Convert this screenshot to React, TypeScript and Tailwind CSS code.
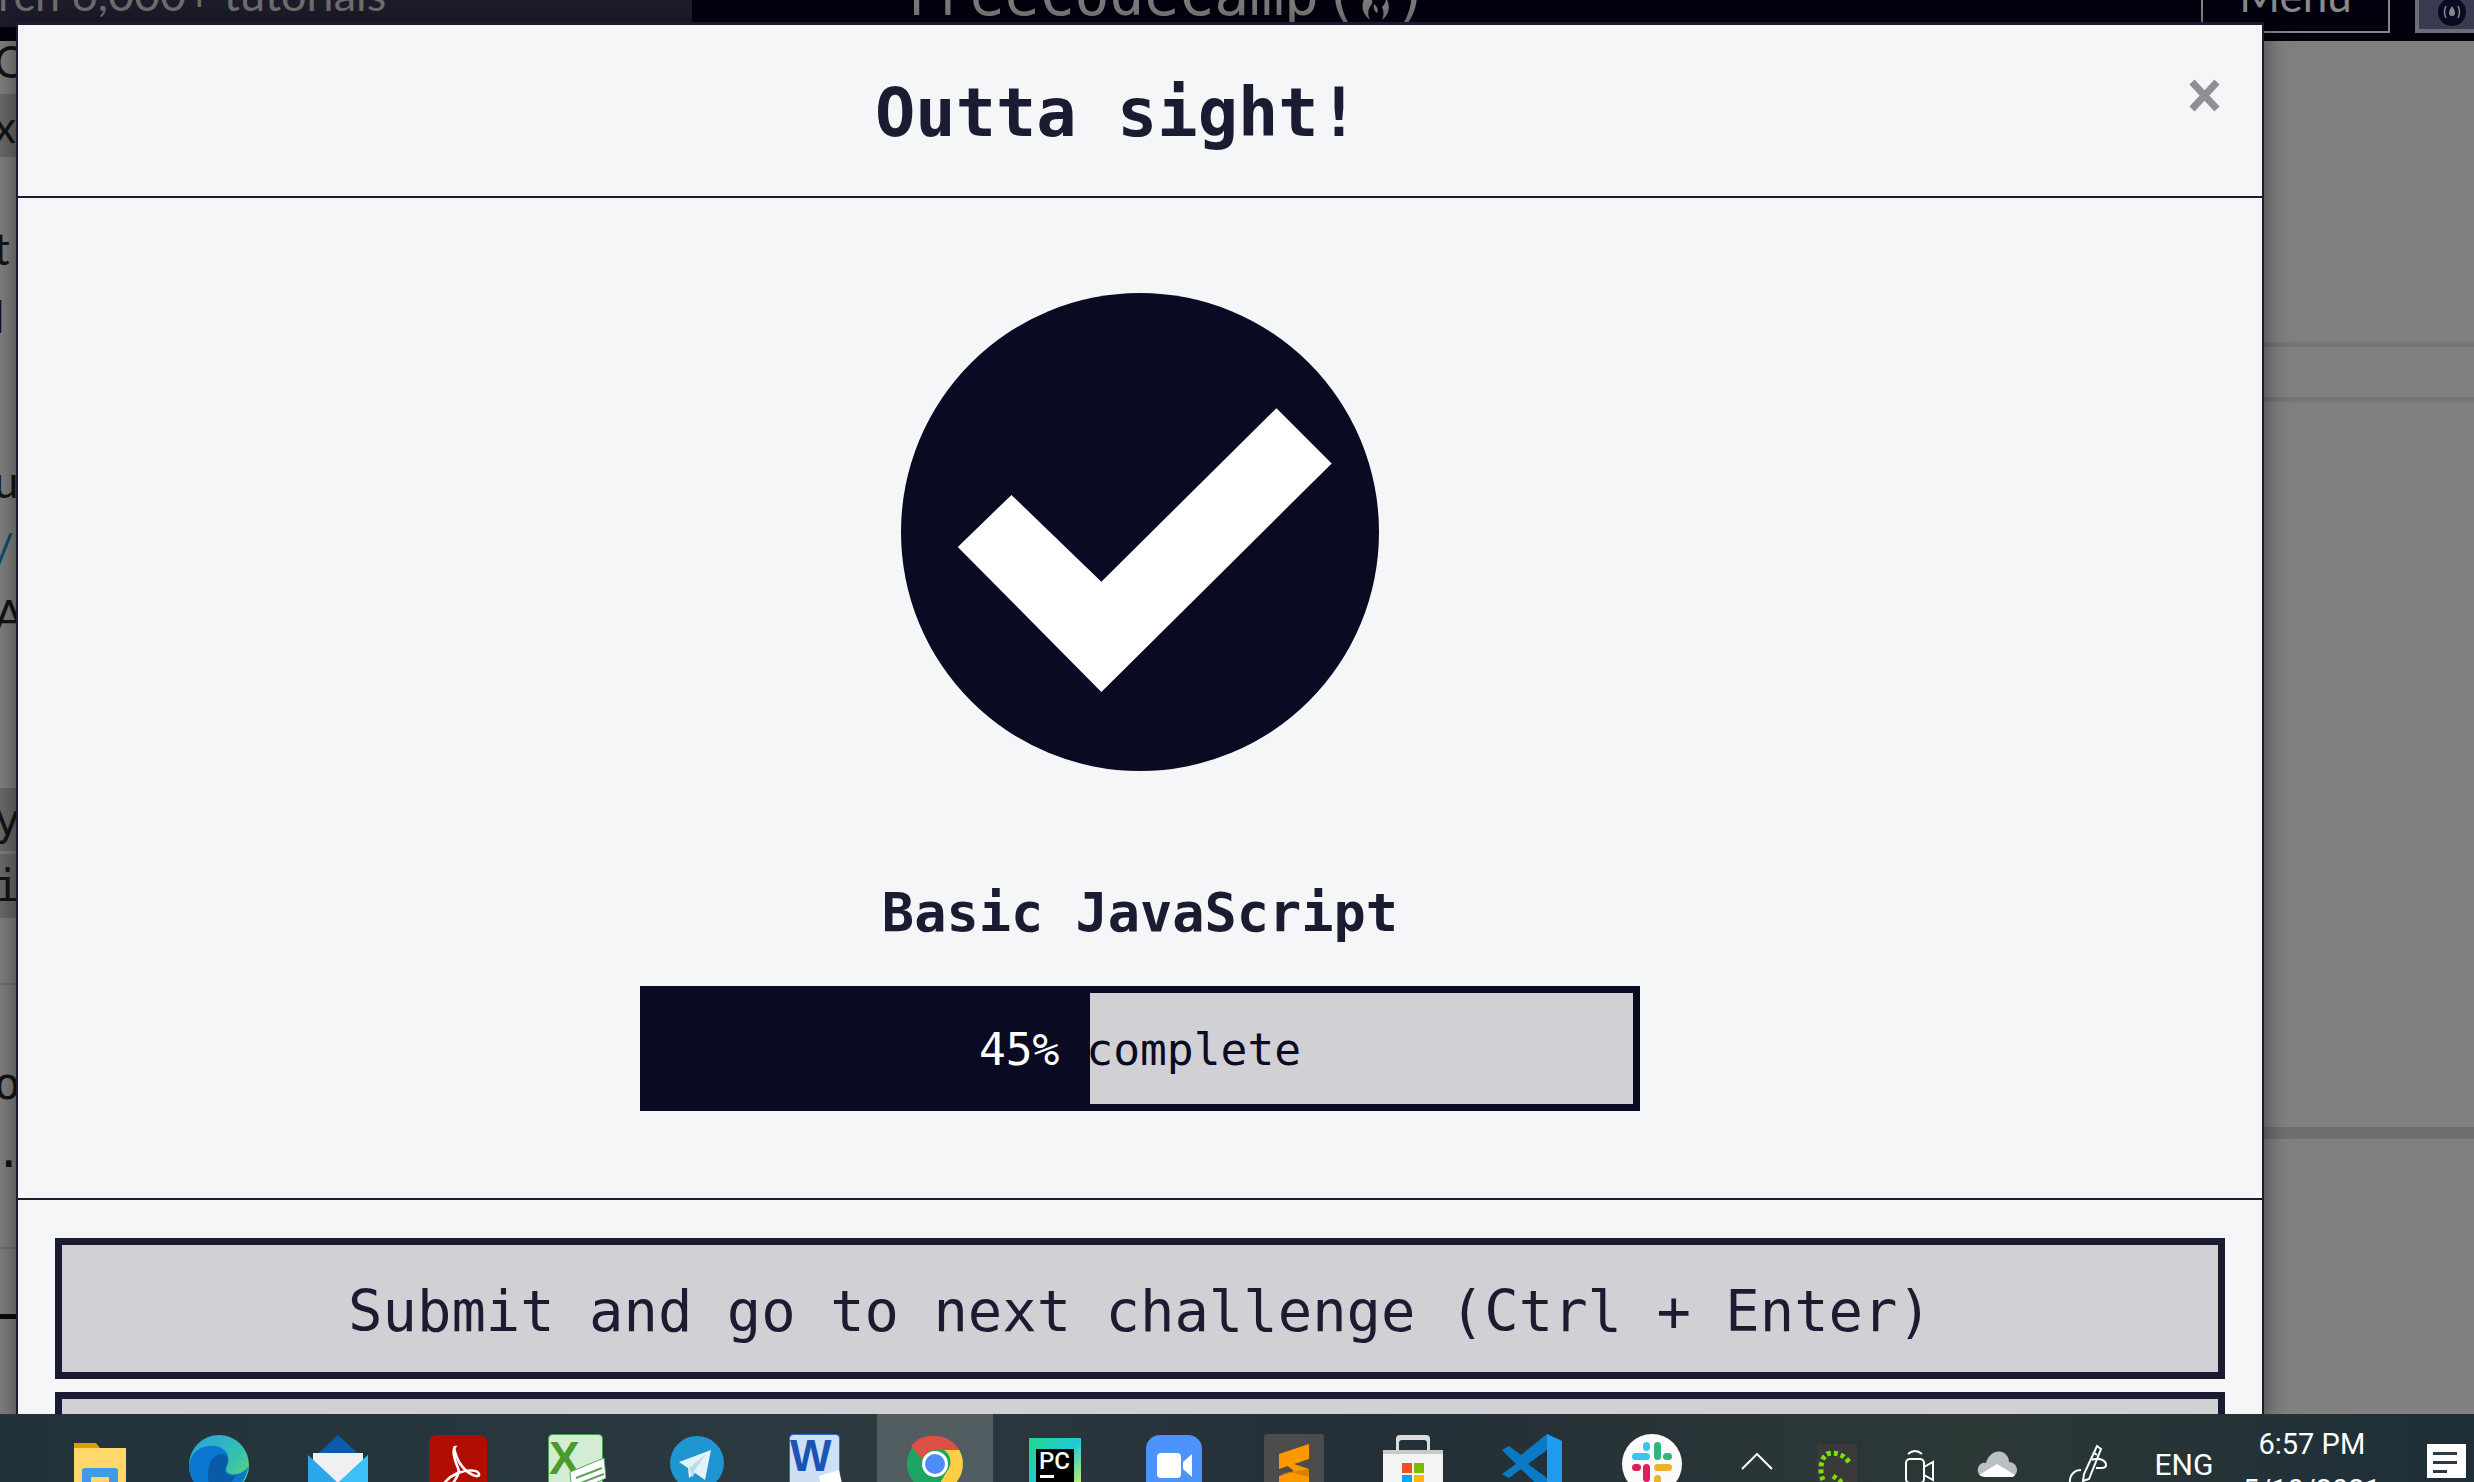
import React from "react";

const mono = "font-['DejaVu_Sans_Mono','Liberation_Mono',monospace]";

const Folder = () => (
  <svg width="60" height="60" viewBox="0 0 60 60" className="mt-[28px]">
    <path d="M4 1h22l4 5v6H4z" fill="#dd9f00" />
    <path d="M4 6h52v54H4z" fill="#ffd76b" />
    <rect x="12" y="26" width="36" height="34" rx="3" fill="#3f9be8" />
    <rect x="21" y="35" width="18" height="25" fill="#ffd76b" />
  </svg>
);
const Edge = () => (
  <svg width="62" height="62" viewBox="0 0 62 62" className="mt-[20px]">
    <defs>
      <linearGradient id="eg" x1="0.2" y1="0" x2="1" y2="0.8">
        <stop offset="0" stopColor="#2aa6d8" />
        <stop offset="0.6" stopColor="#35c2b0" />
        <stop offset="1" stopColor="#6ad85c" />
      </linearGradient>
    </defs>
    <circle cx="31" cy="31" r="30" fill="url(#eg)" />
    <path d="M1 31C3 16 16 10 28 12c10 2 14 10 12 17-1 4-3 6-1 9 2 2 6 3 10 2 5-1 9-4 11-7-2 16-15 28-30 28C13 61 1 48 1 31z" fill="#0a78d0" />
    <path d="M20 40c0-12 6-20 14-20 5 0 7 5 5 10-1 4-3 6-1 9 2 3 6 3 10 2-6 12-18 20-22 18-4-3-6-10-6-19z" fill="#0b5aa8" />
  </svg>
);
const Mail = () => (
  <svg width="60" height="60" viewBox="0 0 60 60" className="mt-[21px]">
    <path d="M30 0L60 28V60H0V28z" fill="#0b5bab" />
    <path d="M5 18h50v10L30 50 5 28z" fill="#f0f0f2" />
    <path d="M0 20l30 28 30-28v40H0z" fill="#29a6ec" />
    <path d="M60 20v40H32L30 48z" fill="#3cc0f5" />
  </svg>
);
const Acrobat = () => (
  <svg width="58" height="60" viewBox="0 0 58 60" className="mt-[21px]">
    <rect width="58" height="60" rx="8" fill="#b10d00" />
    <path d="M26 12c-3 4 0 14 3 21 3 6-8 22-14 21-5-2 4-12 14-16s20-3 21 1c1 5-12 1-20-12-3-6-6-15-4-15z" fill="none" stroke="#fff" strokeWidth="2.6" />
  </svg>
);
const Excel = () => (
  <svg width="58" height="60" viewBox="0 0 58 60" className="mt-[20px]">
    <rect x="0.5" y="0.5" width="54" height="59" rx="4" fill="#d5ecd4" stroke="#3fa24b" />
    <text x="1" y="40" fontFamily="Liberation Sans" fontWeight="700" fontSize="46" fill="#4a9a2c">X</text>
    <path d="M22 38l34-14 2 20-34 16z" fill="#fff" stroke="#5ba55d" />
    <path d="M28 44l26-10M30 50l26-10" stroke="#5ba55d" strokeWidth="2" />
  </svg>
);
const Telegram = () => (
  <svg width="54" height="54" viewBox="0 0 54 54" className="mt-[22px]">
    <circle cx="27" cy="27" r="27" fill="#1f95d2" />
    <path d="M9 26l32-12-6 30-10-7-6 5-1-10z" fill="#e4f2fa" />
    <path d="M19 32l17-14-12 17-1 7z" fill="#bcdcee" />
  </svg>
);
const Word = () => (
  <svg width="54" height="60" viewBox="0 0 54 60" className="mt-[20px]">
    <rect x="0.5" y="0.5" width="50" height="59" rx="4" fill="#cfdff4" stroke="#2a6fd0" />
    <text x="1" y="37" fontFamily="Liberation Sans" fontWeight="700" fontSize="44" fill="#1a55b5">W</text>
    <path d="M30 42l20-6 4 18-20 6z" fill="#fff" />
  </svg>
);
const Chrome = () => (
  <svg width="56" height="56" viewBox="0 0 56 56" className="mt-[22px]">
    <circle cx="28" cy="28" r="28" fill="#1da462" />
    <path d="M28 0a28 28 0 0 1 24.2 14H28a14 14 0 0 0-13 9L4 10A28 28 0 0 1 28 0z" fill="#dd5044" />
    <path d="M52.2 14A28 28 0 0 1 28 56l12-21a14 14 0 0 0-3-21z" fill="#ffcd46" />
    <circle cx="28" cy="28" r="13" fill="#fff" />
    <circle cx="28" cy="28" r="10" fill="#4d8cf5" />
  </svg>
);
const PyCharm = () => (
  <svg width="52" height="60" viewBox="0 0 52 60" className="mt-[24px]">
    <defs>
      <linearGradient id="pc" x1="0" y1="0" x2="1" y2="1">
        <stop offset="0" stopColor="#21d789" />
        <stop offset="0.5" stopColor="#21c8d8" />
        <stop offset="1" stopColor="#fcf84a" />
      </linearGradient>
    </defs>
    <rect width="52" height="60" fill="url(#pc)" />
    <rect x="7" y="11" width="38" height="49" fill="#000" />
    <text x="10" y="31" fontFamily="Roboto" fontWeight="500" fontSize="24" fill="#fff">PC</text>
    <rect x="11" y="37" width="14" height="3" fill="#fff" />
  </svg>
);
const ZoomIcon = () => (
  <svg width="56" height="60" viewBox="0 0 56 60" className="mt-[21px]">
    <rect width="56" height="60" rx="14" fill="#4c94fb" />
    <rect x="11" y="18" width="24" height="25" rx="4" fill="#fff" />
    <path d="M37 27l9-8v23l-9-8z" fill="#fff" />
  </svg>
);
const Sublime = () => (
  <svg width="60" height="60" viewBox="0 0 60 60" className="mt-[20px]">
    <rect width="60" height="60" rx="3" fill="#4c4c4c" />
    <path d="M45 10v15L15 35V20z" fill="#ff9800" />
    <path d="M15 25l30 10v15L15 60V42l15-5z" fill="#ff9800" />
    <path d="M15 40l30-5v8l-15-4z" fill="#d98000" />
  </svg>
);
const Store = () => (
  <svg width="60" height="60" viewBox="0 0 60 60" className="mt-[20px]">
    <path d="M13 16V5q0-4 4-4h26q4 0 4 4v11h-3V9q0-3-3-3H19q-3 0-3 3v7z" fill="#dcdcdc" />
    <rect y="16" width="60" height="44" fill="#f4f4f4" />
    <rect y="16" width="60" height="4" fill="#c9c9c9" />
    <rect x="19" y="29" width="10" height="10" fill="#f25022" />
    <rect x="31" y="29" width="10" height="10" fill="#7fba00" />
    <rect x="19" y="41" width="10" height="10" fill="#00a4ef" />
    <rect x="31" y="41" width="10" height="10" fill="#ffb900" />
  </svg>
);
const VSCode = () => (
  <svg width="60" height="60" viewBox="0 0 60 60" className="mt-[20px]">
    <path d="M45 0l15 7v46l-15 7-26-25-12 9-7-4 14-10L0 16l7-4 12 9z" fill="#0b7ac4" />
    <path d="M45 0l15 7v46l-15 7z" fill="#1f9cf0" />
    <path d="M45 16v28L26 30z" fill="#22303a" />
  </svg>
);
const Slack = () => (
  <svg width="60" height="60" viewBox="0 0 60 60" className="mt-[20px]">
    <circle cx="30" cy="30" r="30" fill="#fafafa" />
    <rect x="10" y="19" width="18" height="7" rx="3.5" fill="#36c5f0" />
    <rect x="21" y="8" width="7" height="9" rx="3.5" fill="#36c5f0" />
    <rect x="32" y="8" width="7" height="18" rx="3.5" fill="#2eb67d" />
    <rect x="41" y="19" width="9" height="7" rx="3.5" fill="#2eb67d" />
    <rect x="10" y="30" width="9" height="7" rx="3.5" fill="#e01e5a" />
    <rect x="21" y="30" width="7" height="18" rx="3.5" fill="#e01e5a" />
    <rect x="32" y="30" width="18" height="7" rx="3.5" fill="#ecb22e" />
    <rect x="32" y="41" width="7" height="9" rx="3.5" fill="#ecb22e" />
  </svg>
);

const apps = [Folder, Edge, Mail, Acrobat, Excel, Telegram, Word, Chrome, PyCharm, ZoomIcon, Sublime, Store, VSCode, Slack];

const sliverRows: { h: string; bg: string; t: string; c?: string; font?: string }[] = [
  { h: "h-[40px]", bg: "", t: "C" },
  { h: "h-[13px]", bg: "", t: "" },
  { h: "h-[63px]", bg: "bg-[#6a6a6a]", t: "x" },
  { h: "h-[64px]", bg: "", t: "" },
  { h: "h-[54px]", bg: "", t: "t" },
  { h: "h-[82px]", bg: "", t: "l" },
  { h: "h-[90px]", bg: "", t: "" },
  { h: "h-[68px]", bg: "", t: "u" },
  { h: "h-[68px]", bg: "", t: "/", c: "text-[#0b4f6c]" },
  { h: "h-[64px]", bg: "", t: "A" },
  { h: "h-[141px]", bg: "", t: "" },
  { h: "h-[63px]", bg: "bg-[#6a6a6a]", t: "y", font: "mono" },
  { h: "h-[3px]", bg: "", t: "" },
  { h: "h-[64px]", bg: "bg-[#6a6a6a]", t: "i", font: "mono" },
  { h: "h-[65px]", bg: "", t: "" },
  { h: "h-[62px]", bg: "border-t-2 border-[#727272]", t: "" },
  { h: "h-[78px]", bg: "", t: "o", font: "mono" },
  { h: "h-[58px]", bg: "", t: "p.", font: "mono" },
  { h: "h-[66px]", bg: "", t: "" },
  { h: "h-[67px]", bg: "border-t-2 border-[#727272]", t: "" },
  { h: "h-[5px]", bg: "bg-[#0c0c0c]", t: "" },
];

export default function App() {
  return (
    <div className="relative flex h-[1482px] w-[2474px] flex-col overflow-hidden bg-[#808080] font-['Lato',sans-serif]">
      {/* top navigation, dimmed */}
      <header className="flex h-[41px] shrink-0 items-start overflow-hidden bg-[#02020f] text-[#6e6e6e]">
        <div className="flex h-[27px] w-[692px] shrink-0 items-start overflow-hidden bg-[#1c1c2a]">
          <span className="-ml-[2px] -mt-[28px] whitespace-nowrap text-[45px] leading-[45px]">rch 6,000+ tutorials</span>
        </div>
        <div className={`${mono} ml-[208px] -mt-[34px] flex w-[530px] shrink-0 items-start whitespace-nowrap text-[58px] leading-[58px] text-[#7a7a7a]`}>
          <span>freeCodeCamp</span>
          <span className="ml-[4px]">(</span>
          <svg width="36" height="32" viewBox="0 0 36 32" className="mt-[24px] shrink-0">
            <path d="M8 6C2 14 4 24 12 30c-3-6-2-12 2-16 1-3 0-6-6-8zM28 8c5 8 3 17-4 22 2-5 2-9 0-13 2-2 4-5 4-9zM16 14c3 3 5 5 3 9-3-2-4-5-3-9z" fill="#7a7a7a" />
          </svg>
          <span>)</span>
        </div>
        <div className="ml-[771px] -mt-[4px] flex h-[37px] w-[189px] shrink-0 items-start justify-center border-2 border-[#858585] text-[44px] leading-[44px] text-[#8a8a8a]">
          <span className="-mt-[25px]">Menu</span>
        </div>
        <div className="ml-[25px] flex h-[33px] w-[59px] shrink-0 justify-center bg-[#6d6d78] pl-[4px]">
          <div className="flex h-[29px] w-full justify-center bg-[#3a3a50] pl-[10px]">
            <svg width="28" height="28" viewBox="0 0 28 28" className="-mt-[2px]">
              <circle cx="14" cy="14" r="14" fill="#0a0a23" />
              <path d="M8 8q-3 6 0 12M20 8q3 6 0 12" fill="none" stroke="#888" strokeWidth="1.5" />
              <path d="M14 8q3 4 3 7a3 3 0 0 1-6 0q0-3 3-7z" fill="#888" />
            </svg>
          </div>
        </div>
      </header>

      {/* dimmed page under the dialog */}
      <main className="flex min-h-0 flex-1">
        <div className="w-[18px] shrink-0 overflow-hidden text-[#141414]">
          {sliverRows.map((r, i) => (
            <div key={i} className={`${r.h} ${r.bg} flex items-center overflow-hidden text-[44px] leading-none`}>
              <span className={`${r.c ?? ""} ${r.font === "mono" ? mono : ""} ${r.t === "p." ? "-ml-[31px]" : "-ml-[6px]"}`}>{r.t}</span>
            </div>
          ))}
        </div>
        <div className="ml-[2246px] flex-1 pt-[301px]">
          <div className="h-[5px] bg-[#757575]" />
          <div className="mt-[50px] h-[5px] bg-[#757575]" />
          <div className="mt-[725px] h-[12px] bg-[#6f6f6f]" />
        </div>
      </main>

      {/* dialog */}
      <section className="absolute left-[16px] top-[22px] z-10 h-[1400px] w-[2248px] border-x-2 border-t-[3px] border-[#1b1b32] bg-[#f5f6f7] text-[#1b1b32] shadow-[0_5px_24px_rgba(0,0,0,0.5)]">
        <div className="flex h-[173px] items-start justify-center border-b-2 border-[#1b1b32] pr-[46px] pt-[49px]">
          <h1 className={`${mono} text-[67px] font-bold leading-[78px]`}>Outta sight!</h1>
        </div>
        <svg className="absolute right-[42px] top-[54px]" width="31" height="33" viewBox="0 0 31 33" aria-label="close">
          <path d="M3 3l25 27M28 3L3 30" stroke="#8f8f9a" strokeWidth="7" />
        </svg>

        <div className="flex h-[1000px] flex-col items-center pt-[95px]">
          <svg width="478" height="478" viewBox="571 186 303 303" className="shrink-0">
            <circle cx="722.5" cy="337.5" r="151.5" fill="#0a0a23" />
            <polygon points="607,347 641,314 698,369 809,259 844,294 698,439" fill="#fff" />
          </svg>
          <h2 className={`${mono} mt-[110px] text-[53.6px] font-bold leading-[64px]`}>Basic JavaScript</h2>
          <div className="relative mt-[41px] h-[125px] w-[1000px] shrink-0 border-[7px] border-[#0a0a23] bg-[#d0d0d5]">
            <div className="h-full w-[443px] bg-[#0a0a23]" />
            <div className={`${mono} absolute inset-0 flex items-center justify-center whitespace-pre pt-[3px] text-[44.6px] leading-none`}>
              <span className="text-white">45% </span>
              <span className="text-[#0a0a23]">complete</span>
            </div>
          </div>
        </div>

        <div className="flex flex-col gap-[13px] border-t-2 border-[#1b1b32] px-[37px] pt-[38px]">
          <button className={`${mono} h-[141px] shrink-0 border-[7px] border-[#1b1b32] bg-[#d0d0d5] pt-[6px] text-[57.2px] leading-none`}>
            Submit and go to next challenge (Ctrl + Enter)
          </button>
          <div className="h-[141px] shrink-0 border-[7px] border-[#1b1b32] bg-[#d0d0d5]" />
        </div>
      </section>

      {/* Windows taskbar */}
      <footer className="relative z-20 flex h-[68px] shrink-0 items-start overflow-hidden bg-[linear-gradient(90deg,#21323b_0%,#2c3a40_35%,#232f37_55%,#2c3836_80%,#1d2e38_100%)] pl-[40px] text-white">
        {apps.map((Icon, i) => (
          <div key={i} className="flex h-full w-[119.4px] shrink-0 justify-center">
            <div className={`flex h-full w-[116px] justify-center ${i === 7 ? "bg-[#525d62]" : ""}`}>
              <Icon />
            </div>
          </div>
        ))}
        <svg width="32" height="17" viewBox="0 0 32 17" className="ml-[30px] mt-[39px] shrink-0">
          <path d="M1 16L16 1l15 15" fill="none" stroke="#fff" strokeWidth="2" />
        </svg>
        <div className="ml-[44px] mt-[30px] h-[50px] w-[40px] shrink-0 bg-[#3a3a3a]">
          <svg width="40" height="50" viewBox="0 0 40 50">
            <path d="M32 18C26 10 18 8 10 10 4 14 2 26 6 36M16 32l14 10" fill="none" stroke="#7fe000" strokeWidth="5" strokeDasharray="4 3" />
          </svg>
        </div>
        <svg width="29" height="50" viewBox="0 0 29 50" className="ml-[48px] mt-[33px] shrink-0">
          <rect x="1" y="12" width="18" height="24" rx="4" fill="none" stroke="#fff" strokeWidth="2" />
          <path d="M19 20l9-5v18l-9-5M3 7q7-6 14 0M3 41q7 6 14 0" fill="none" stroke="#fff" strokeWidth="2" />
        </svg>
        <svg width="40" height="28" viewBox="0 0 40 28" className="ml-[43px] mt-[36px] shrink-0">
          <path d="M8 27C2 27 0 22 1 18c1-4 5-6 8-5 2-8 9-13 16-11 5 2 7 6 7 10 5 0 8 4 8 8 0 4-3 7-7 7z" fill="#b9bfc2" />
          <path d="M2 25l18-11 18 11-2 2H8z" fill="#fff" />
        </svg>
        <svg width="40" height="40" viewBox="0 0 40 40" className="ml-[51px] mt-[30px] shrink-0">
          <path d="M29 2l4 3-12 30-6 2 1-7zM25 8l4 3M24 16c6-3 14 0 14 5 0 4-6 3-10 3M13 26C6 26 1 32 2 38" fill="none" stroke="#fff" strokeWidth="2" />
        </svg>
        <div className="ml-[46px] mt-[35px] shrink-0 font-['Roboto',sans-serif] text-[30px] leading-[32px]">ENG</div>
        <div className="ml-[33px] mt-[14px] flex w-[131px] shrink-0 flex-col items-center font-['Roboto',sans-serif] text-[29px] leading-[32px]">
          <span>6:57 PM</span>
          <span className="mt-[14px] whitespace-nowrap">5/10/2021</span>
        </div>
        <div className="relative ml-[50px] mt-[30px] h-[34px] w-[39px] shrink-0 bg-white">
          <div className="ml-[6px] mt-[8px] h-[3px] w-[24px] bg-[#2b3a40]" />
          <div className="ml-[6px] mt-[6px] h-[3px] w-[24px] bg-[#2b3a40]" />
          <div className="ml-[6px] mt-[6px] h-[3px] w-[14px] bg-[#2b3a40]" />
        </div>
      </footer>
    </div>
  );
}
